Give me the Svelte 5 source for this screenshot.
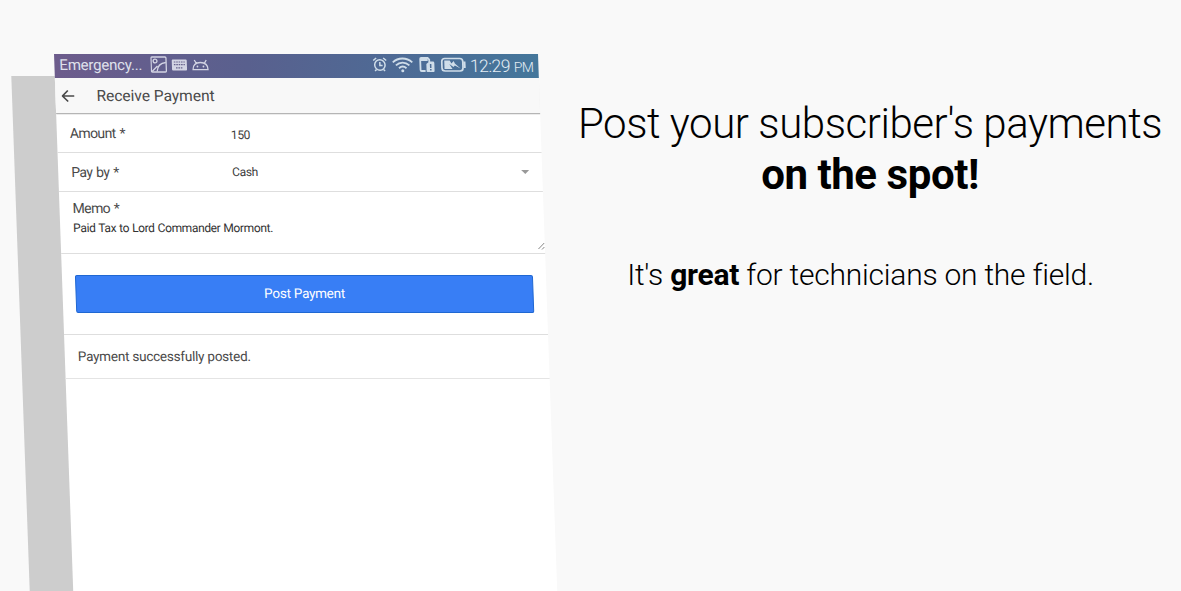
<script lang="ts">
    const fields = [
        { id: "amount", label: "Amount *", value: "150", select: false },
        { id: "method", label: "Pay by *", value: "Cash", select: true }
    ];
    const memo = "Paid Tax to Lord Commander Mormont.";
    const time = "12:29";
</script>

<main class="promo">
    <section class="stage">
        <div class="phone">
            <div class="status-bar">
                <span class="carrier">Emergency...</span>
                <svg class="notices" width="60" height="18" viewBox="0 0 60 18">
                    <g fill="none" stroke="currentColor" stroke-width="1.3">
                        <rect x="0.800" y="1" width="15" height="15" rx="1" />
                        <circle cx="4.800" cy="5" r="1.900" />
                        <path d="M1.500 15.500L7 10M6.500 15.500C7 10 10 7 15.500 6.500" />
                    </g>
                    <rect x="21.500" y="3.500" width="15" height="11" rx="1" fill="currentColor" />
                    <path
                        d="M23.500 6h11M23.500 8.700h11M25.500 11.800h7"
                        stroke="#67618c"
                        stroke-width="1.200"
                        stroke-dasharray="1.600 0.800"
                    />
                    <path
                        d="M42.500 13.700C42.500 9 45.500 6.500 50 6.500S57.500 9 57.500 13.700ZM46 7.300L44 4M54 7.300L56 4"
                        fill="none"
                        stroke="currentColor"
                        stroke-width="1.300"
                    />
                    <circle cx="47" cy="10.500" r="0.900" fill="currentColor" />
                    <circle cx="53" cy="10.500" r="0.900" fill="currentColor" />
                </svg>
                <svg class="system" width="94" height="18" viewBox="0 0 94 18">
                    <g fill="none" stroke="currentColor" stroke-width="1.500">
                        <circle cx="7.500" cy="9" r="5.200" />
                        <path d="M7.500 6v3.500h2.700M1 4.500L4 2M14 4.500L11 2M4 13.500L2.500 15M11 13.500L12.500 15" />
                        <path d="M20.500 6.300C26 1.200 34.500 1.200 40 6.300M23.500 9.400C27.500 5.700 33 5.700 37 9.400M26.500 12.200C29 10 31.500 10 34 12.200" stroke-width="1.800" />
                    </g>
                    <circle cx="30.200" cy="14.700" r="1.500" fill="currentColor" />
                    <path d="M57 6V3.500L55.500 2H49Q48 2 48 3V14Q48 15 49 15H53" fill="none" stroke="currentColor" stroke-width="1.800" />
                    <path d="M48.500 2h7v3h-7z" fill="currentColor" />
                    <path fill-rule="evenodd" d="M54 8L57 5.500H61Q62 5.500 62 7V15Q62 16 61 16H55Q54 16 54 15ZM57.500 8v4h1.500V8ZM57.500 13v1.500h1.500V13Z" fill="currentColor" />
                    <rect x="69.500" y="2.500" width="21" height="12.500" rx="3" fill="none" stroke="currentColor" stroke-width="1.700" />
                    <path d="M91.500 6h1.200v5.500h-1.200z" fill="currentColor" stroke="currentColor" />
                    <path d="M72 4.500h5.500L79 7.500l2.500-2.500 1 2.500 5.500 5-5.500-3-1.500 1.500-4-3 3 5H72z" fill="currentColor" />
                </svg>
                <span class="clock">{time}&nbsp;<small>PM</small></span>
            </div>

            <header class="nav-bar">
                <svg class="back" width="13" height="14" viewBox="0 0 13 14">
                    <path d="M13 7H1.500M6.500 1.500L1 7L6.500 12.500" fill="none" stroke="currentColor" stroke-width="1.700" />
                </svg>
                <h1>Receive Payment</h1>
            </header>

            {#each fields as field (field.id)}
                <div class="field {field.id}">
                    <span class="label">{field.label}</span>
                    <span class="value">{field.value}</span>
                    {#if field.select}
                        <span class="caret"></span>
                    {/if}
                </div>
            {/each}

            <div class="memo">
                <span class="label">Memo *</span>
                <span class="memo-text">{memo}</span>
                <svg class="grip" width="7" height="8" viewBox="0 0 7 8">
                    <path d="M0.500 7L6.500 1M4 7.500L6.500 5" stroke="#777" stroke-width="0.900" />
                </svg>
            </div>

            <div class="actions">
                <button type="button">Post Payment</button>
            </div>

            <p class="notice">Payment successfully posted.</p>
        </div>
    </section>

    <section class="pitch">
        <h2>Post your subscriber's payments<br /><strong>on the spot!</strong></h2>
        <p>It's <strong>great</strong> for technicians on the field.</p>
    </section>
</main>

<style>
    :global(body) {
        background: #f9f9f9;
        overflow: hidden;
    }
    .promo {
        display: grid;
        grid-template-columns: 560px 621px;
        height: 591px;
        overflow: hidden;
        font-family: Roboto, "Liberation Sans", sans-serif;
        background: #f9f9f9;
        color: #000;
    }
    .stage {
        padding: 54px 0 0 54px;
    }
    .phone {
        width: 484px;
        height: 560px;
        background: #fff;
        box-shadow: -43.5px 22px 0 #cdcdcd;
        transform: skewX(2.05deg);
        transform-origin: 0 0;
        color: #4a4a4a;
    }
    .status-bar {
        display: flex;
        align-items: center;
        box-sizing: border-box;
        height: 24px;
        padding: 0 5px 2px;
        background: linear-gradient(100deg, #6d5c8c, #59608e 40%, #4c6c96 75%, #44779b);
        color: #dfe0eb;
        white-space: nowrap;
    }
    .carrier {
        width: 91px;
        font-size: 15px;
        letter-spacing: -0.22px;
    }
    .notices,
    .system {
        flex: none;
        color: #d3d4e4;
    }
    .system {
        margin-left: auto;
        color: #cfdde9;
    }
    .clock {
        margin: 3px 0 0 3px;
        font-size: 17.5px;
        font-weight: 300;
        line-height: 24px;
        letter-spacing: -0.5px;
        color: #e4edf4;
    }
    .clock small {
        font-size: 14px;
    }
    .nav-bar {
        display: flex;
        align-items: center;
        box-sizing: border-box;
        height: 36px;
        padding-left: 6px;
        background: #f8f8f8;
        border-bottom: 1px solid #b5b5b5;
        box-shadow: 0 1px 0 #ececec;
    }
    h1 {
        margin: 0 0 0 22px;
        font-size: 15.5px;
        font-weight: 400;
    }
    .field {
        display: flex;
        align-items: center;
        box-sizing: border-box;
        height: 39px;
        padding: 0 13px;
        border-bottom: 1px solid #dedede;
    }
    .label {
        width: 161px;
        font-size: 14px;
        letter-spacing: -0.6px;
        word-spacing: 1px;
    }
    .value {
        font-size: 12px;
        letter-spacing: -0.4px;
        color: #3c3c3c;
    }
    .amount .value {
        padding-top: 3px;
    }
    .caret {
        margin-left: auto;
        border: 4.5px solid transparent;
        border-top-color: #999;
        border-bottom: 0;
    }
    .memo {
        position: relative;
        display: flex;
        flex-direction: column;
        box-sizing: border-box;
        height: 62px;
        padding: 7px 13px;
        border-bottom: 1px solid #dedede;
    }
    .memo .label {
        line-height: 19px;
    }
    .memo-text {
        font-size: 12px;
        line-height: 20px;
        letter-spacing: -0.36px;
        word-spacing: 0.35px;
        color: #333;
    }
    .grip {
        position: absolute;
        right: 0;
        bottom: 3px;
    }
    .actions {
        box-sizing: border-box;
        height: 81px;
        padding: 21px 13px 0;
        border-bottom: 1px solid #dedede;
    }
    button {
        display: block;
        width: 100%;
        height: 38px;
        padding: 0 0 2px;
        border: 1px solid #1f67d2;
        border-radius: 2px;
        background: #387ef5;
        color: #fff;
        font-family: inherit;
        font-size: 13.5px;
        letter-spacing: -0.25px;
    }
    .notice {
        box-sizing: border-box;
        height: 44px;
        margin: 0;
        padding-left: 13px;
        border-bottom: 1px solid #e4e4e4;
        font-size: 13.5px;
        line-height: 42px;
        letter-spacing: -0.23px;
    }
    .pitch {
        padding-top: 98px;
        text-align: center;
        white-space: nowrap;
    }
    h2 {
        margin: 0 1px 0 0;
        font-size: 42px;
        font-weight: 300;
        line-height: 51px;
        letter-spacing: -0.44px;
    }
    .pitch p {
        margin: 55px 20px 0 0;
        font-size: 30px;
        font-weight: 300;
        line-height: 40px;
        letter-spacing: -0.23px;
    }
    strong {
        font-weight: 700;
    }
</style>
